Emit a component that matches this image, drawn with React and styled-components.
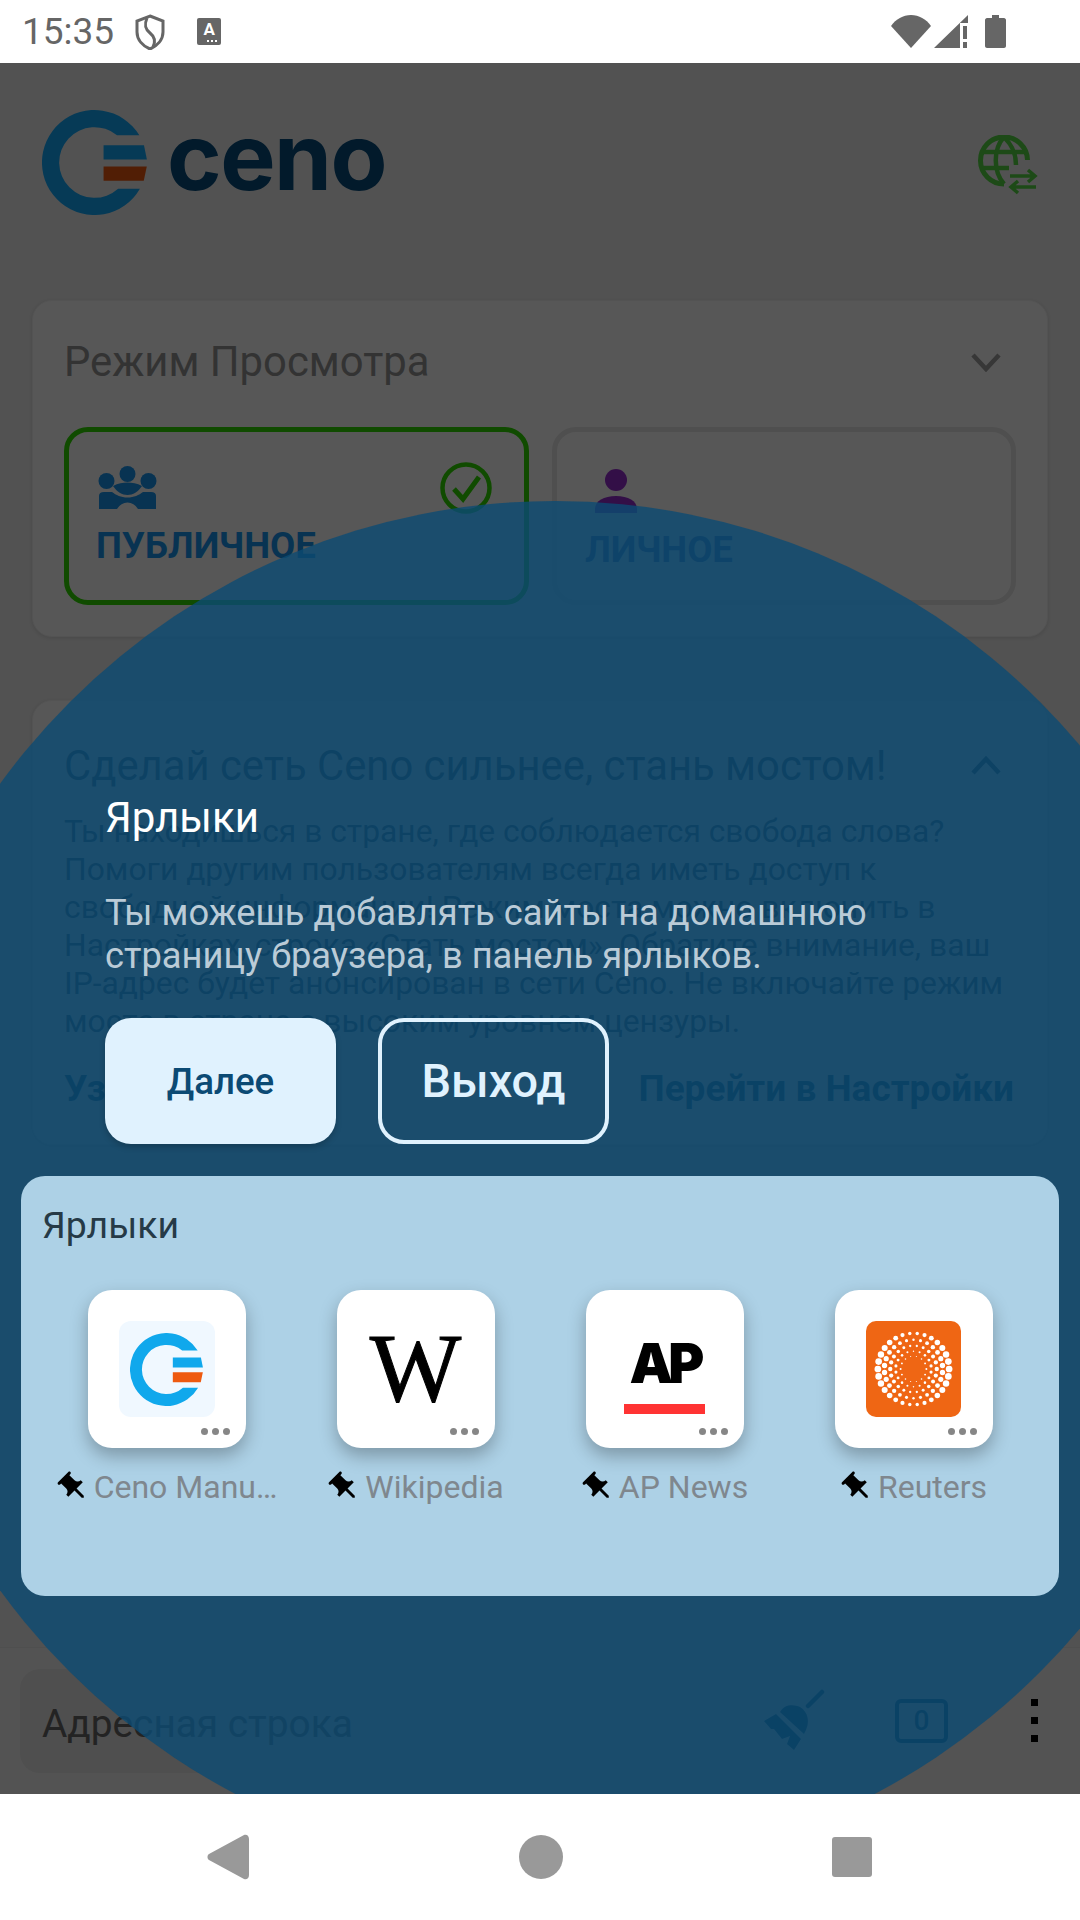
import React from "react";
import styled, { createGlobalStyle } from "styled-components";

const GlobalStyle = createGlobalStyle`
  html, body { margin: 0; padding: 0; background: #fff; }
  * { box-sizing: border-box; }
  body { font-family: Roboto, "Noto Sans", sans-serif; }
`;

const shortcuts = [
  { name: "Ceno Manu…", logo: "ceno" },
  { name: "Wikipedia", logo: "wiki" },
  { name: "AP News", logo: "ap" },
  { name: "Reuters", logo: "reuters" },
];

const bridgeLines = [
  "Ты находишься в стране, где соблюдается свобода слова?",
  "Помоги другим пользователям всегда иметь доступ к",
  "свободной информации! Режим моста можно включить в",
  "Настройках, строка «Стать мостом». Обратите внимание, ваш",
  "IP-адрес будет анонсирован в сети Ceno. Не включайте режим",
  "моста в стране с высоким уровнем цензуры.",
];

// dots of the reuters mark, rings from the outside in
const reutersDots = [];
[
  [36, 30, 3.4],
  [29.5, 26, 2.7],
  [23.5, 22, 2.2],
  [18, 18, 1.6],
  [13, 14, 1],
].forEach(([radius, count, size], ring) => {
  for (let i = 0; i < count; i++) {
    const angle = ((i + ring * 0.5) / count) * Math.PI * 2;
    const scale = 0.45 + 0.55 * Math.abs(Math.cos(angle));
    reutersDots.push({
      cx: 48 + radius * Math.cos(angle),
      cy: 48 + radius * Math.sin(angle),
      r: size * scale,
    });
  }
});

const CenoMark = ({ size, ring, low }) => (
  <svg width={size} height={size} viewBox="0 0 104 104">
    <path
      fill={ring}
      d="M96.4 25A52 52 0 1 0 97 78L75.4 78A35 35 0 1 1 74.3 25Z"
    />
    <path fill={ring} d="M61 35H101L103.9 49H61Z" />
    <path fill={low} d="M61 56H103.8L100.8 70H61Z" />
  </svg>
);

const GlobeIcon = () => (
  <svg width="62" height="62" viewBox="0 0 62 62" fill="none" stroke="#55d845" strokeWidth="5">
    <path d="M26 49A23.500 23.500 0 1 1 49.500 25" />
    <path d="M26 2C15 14 15 36 26 49M26 2C35 11 38 19 38 30" strokeWidth="4.500" />
    <path d="M5 17H47M5 33H31" strokeWidth="4.500" />
    <path d="M32 41H56M50 35L57 41L50 47M58 52H34M40 46L33 52L40 58" strokeWidth="3.500" />
  </svg>
);

const Chevron = ({ up }) => (
  <svg width="32" height="20" viewBox="0 0 32 20" fill="none" stroke={up ? "#3a5a78" : "#a0a0a0"} strokeWidth="4.500">
    <path d={up ? "M3 18L16 4L29 18" : "M3 3L16 17L29 3"} />
  </svg>
);

const PeopleIcon = () => (
  <svg width="60" height="44" viewBox="0 0 60 44" fill="#1896f0">
    <circle cx="29.500" cy="8" r="8" />
    <circle cx="8.500" cy="15" r="8" />
    <circle cx="50.500" cy="15" r="8" />
    <path d="M15 20C20 17 25 16.500 29.500 16.500C34 16.500 39 17 44 20C40 26 35 29 29.500 29C24 29 19 26 15 20Z" />
    <path d="M1 43V30Q1 26 6 26H14C18 29 23 31.500 29.500 31.500C36 31.500 41 29 45 26H53Q58 26 58 30V43H40Q36 36.500 29.500 36.500Q23 36.500 19 43Z" />
  </svg>
);

const CheckIcon = () => (
  <svg width="52" height="52" viewBox="0 0 52 52" fill="none" stroke="#30dc00" strokeWidth="4.500">
    <circle cx="26" cy="26" r="23.500" />
    <path d="M14 27L23 37L39 15" strokeWidth="5" />
  </svg>
);

const PersonIcon = () => (
  <svg width="44" height="44" viewBox="0 0 44 44" fill="#962cd0">
    <ellipse cx="22" cy="11" rx="11" ry="11" />
    <path d="M1 44V40C1 32 10 27 22 27C34 27 43 32 43 40V44Z" />
  </svg>
);

const BroomIcon = () => (
  <svg width="62" height="64" viewBox="0 0 62 64" fill="#0a5a8e">
    <path d="M44 17L58 3" fill="none" stroke="#0a5a8e" strokeWidth="4.500" strokeLinecap="round" />
    <path d="M16 23C20 15 30 15 36 18C44 23 47 33 40 45Z" />
    <path d="M0 32L12 25L37 50L30 61L23 55L26 47L18 50L10 40L7 40Z" />
  </svg>
);

const PinIcon = () => (
  <svg width="35" height="35" viewBox="0 0 24 24" fill="#000">
    <path
      transform="rotate(-45 12 12)"
      d="M16 9V4h1c.55 0 1-.45 1-1s-.45-1-1-1H7c-.55 0-1 .45-1 1s.45 1 1 1h1v5c0 1.66-1.34 3-3 3v2h5.97v7l1 1 1-1v-7H19v-2c-1.66 0-3-1.34-3-3z"
    />
  </svg>
);

const StatusIcons = {
  shield: (
    <svg width="30" height="36" viewBox="0 0 30 36" fill="none" stroke="#666" strokeWidth="3">
      <path d="M15 2L28 7V18C28 26 22 32 15 35C8 32 2 26 2 18V7Z" />
      <path d="M12 4C9 11 10 15 15 19C20 23 21 27 18 33" />
    </svg>
  ),
  wifi: (
    <svg width="40" height="33" viewBox="0 0 40 33" fill="#666">
      <path d="M0 11C5 4 12 0 20 0C28 0 35 4 40 11L20 33Z" />
    </svg>
  ),
  signal: (
    <svg width="34" height="33" viewBox="0 0 34 33" fill="#666">
      <path d="M34 0V8H26V33H0Z" />
      <path d="M29 11H33V24H29ZM29 27H33V33H29Z" />
    </svg>
  ),
  battery: (
    <svg width="21" height="33" viewBox="0 0 21 33" fill="#666">
      <path d="M7 0H14V3H19C20 3 21 4 21 5V31C21 32 20 33 19 33H2C1 33 0 32 0 31V5C0 4 1 3 2 3H7Z" />
    </svg>
  ),
};

function TileLogo({ logo }) {
  if (logo === "ceno") {
    return (
      <CenoTile>
        <CenoMark size={73} ring="#10a8ec" low="#ee5a10" />
      </CenoTile>
    );
  }
  if (logo === "wiki") {
    return <WikiLetter>W</WikiLetter>;
  }
  if (logo === "ap") {
    return (
      <ApMark>
        <ApLetters>AP</ApLetters>
        <ApBar />
      </ApMark>
    );
  }
  return (
    <ReutersTile>
      <svg width="96" height="96" viewBox="0 0 96 96" fill="#fff">
        {reutersDots.map((dot, i) => (
          <circle key={i} cx={dot.cx} cy={dot.cy} r={dot.r} />
        ))}
      </svg>
    </ReutersTile>
  );
}

function App() {
  return (
    <Screen>
      <GlobalStyle />
      <StatusBar>
        <StatusGroup>
          <Clock>15:35</Clock>
          {StatusIcons.shield}
          <KeyboardBadge>A</KeyboardBadge>
        </StatusGroup>
        <StatusGroup $tight>
          {StatusIcons.wifi}
          {StatusIcons.signal}
          <BatterySlot>{StatusIcons.battery}</BatterySlot>
        </StatusGroup>
      </StatusBar>

      <Main>
        <BrandRow>
          <Brand>
            <CenoMark size={105} ring="#12aafd" low="#ee5a10" />
            <BrandName>ceno</BrandName>
          </Brand>
          <GlobeSlot>
            <GlobeIcon />
          </GlobeSlot>
        </BrandRow>

        <Card>
          <CardHeader $height={126} $bottom={5}>
            <CardTitle>Режим Просмотра</CardTitle>
            <Chevron />
          </CardHeader>
          <Modes>
            <ModeBox $active>
              <ModeTop>
                <PeopleIcon />
                <CheckIcon />
              </ModeTop>
              <ModeName>ПУБЛИЧНОЕ</ModeName>
            </ModeBox>
            <ModeBox>
              <ModeTop $personal>
                <PersonIcon />
              </ModeTop>
              <ModeName $personal>ЛИЧНОЕ</ModeName>
            </ModeBox>
          </Modes>
        </Card>

        <Card $bridge>
          <CardHeader $height={111} $top={17}>
            <CardTitle $bridge>Сделай сеть Ceno сильнее, стань мостом!</CardTitle>
            <Chevron up />
          </CardHeader>
          <BridgeText>
            {bridgeLines.map((line) => (
              <div key={line}>{line}</div>
            ))}
          </BridgeText>
          <BridgeActions>
            <ActionLink>Узнать больше</ActionLink>
            <ActionLink>Перейти в Настройки</ActionLink>
          </BridgeActions>
        </Card>

        <BottomBar>
          <AddressBar>Адресная строка</AddressBar>
          <BroomSlot>
            <BroomIcon />
          </BroomSlot>
          <TabCount>0</TabCount>
          <MenuDots>
            <i />
            <i />
            <i />
          </MenuDots>
        </BottomBar>

        <Scrim />
        <Spotlight />

        <Tour>
          <TourTitle>Ярлыки</TourTitle>
          <TourText>
            Ты можешь добавлять сайты на домашнюю
            <br />
            страницу браузера, в панель ярлыков.
          </TourText>
          <TourButtons>
            <NextButton>Далее</NextButton>
            <ExitButton>Выход</ExitButton>
          </TourButtons>
          <ShortcutPanel>
            <ShortcutTitle>Ярлыки</ShortcutTitle>
            <ShortcutGrid>
              {shortcuts.map((item) => (
                <Shortcut key={item.name}>
                  <Tile>
                    <TileLogo logo={item.logo} />
                    <TileDots>
                      <i />
                      <i />
                      <i />
                    </TileDots>
                  </Tile>
                  <ShortcutLabel>
                    <PinIcon />
                    <span>{item.name}</span>
                  </ShortcutLabel>
                </Shortcut>
              ))}
            </ShortcutGrid>
          </ShortcutPanel>
        </Tour>
      </Main>

      <NavBar>
        <svg width="42" height="46" viewBox="0 0 42 46" fill="#999">
          <path d="M37 1C39 0 42 1 42 5V41C42 45 39 46 37 45L2 26C0 25 0 21 2 20Z" />
        </svg>
        <HomeDot />
        <RecentSquare />
      </NavBar>
    </Screen>
  );
}

const Screen = styled.div`
  width: 1080px;
  height: 1920px;
  display: flex;
  flex-direction: column;
  overflow: hidden;
`;

const StatusBar = styled.header`
  height: 63px;
  background: #fff;
  display: flex;
  align-items: center;
  justify-content: space-between;
  padding: 0 74px 0 22px;
`;

const StatusGroup = styled.div`
  display: flex;
  align-items: center;
  gap: ${(p) => (p.$tight ? "3px" : "21px")};
`;

const BatterySlot = styled.div`
  display: flex;
  margin-left: 14px;
`;

const Clock = styled.span`
  font-size: 37px;
  color: #666;
  line-height: 63px;
`;

const KeyboardBadge = styled.span`
  position: relative;
  width: 24px;
  height: 27px;
  margin-left: 11px;
  border-radius: 2px;
  background: #666;
  color: #fff;
  font-size: 17px;
  font-weight: 700;
  line-height: 22px;
  text-align: center;

  &::after {
    content: "";
    position: absolute;
    right: 3px;
    bottom: 3px;
    width: 11px;
    height: 2px;
    background: repeating-linear-gradient(90deg, #fff 0 2px, transparent 2px 4px);
  }
`;

const Main = styled.main`
  position: relative;
  flex: 1;
  overflow: hidden;
  background: #f0f0f0;
  display: flex;
  flex-direction: column;
`;

const BrandRow = styled.div`
  height: 237px;
  padding: 47px 40px 0 42px;
  display: flex;
  align-items: flex-start;
  justify-content: space-between;
`;

const Brand = styled.div`
  display: flex;
  align-items: center;
  gap: 20px;
`;

const BrandName = styled.span`
  font-family: Inter, sans-serif;
  font-size: 93px;
  font-weight: 700;
  line-height: 105px;
  letter-spacing: -1.5px;
  color: #064c7e;
  position: relative;
  top: -6px;
`;

const GlobeSlot = styled.div`
  display: flex;
  padding-top: 25px;
`;

const Card = styled.section`
  margin: ${(p) => (p.$bridge ? "63px" : "0")} 32px 0;
  padding: 0 31px;
  height: ${(p) => (p.$bridge ? "445px" : "337px")};
  background: #fff;
  border: 1px solid #f4f4f4;
  border-radius: 20px;
  box-shadow: 0 1px 4px rgba(0, 0, 0, 0.12);
`;

const CardHeader = styled.div`
  height: ${(p) => p.$height}px;
  padding: ${(p) => p.$top || 0}px 14px ${(p) => p.$bottom || 0}px 0;
  display: flex;
  align-items: center;
  justify-content: space-between;
`;

const CardTitle = styled.h2`
  margin: 0;
  font-size: 41.8px;
  font-weight: 400;
  color: ${(p) => (p.$bridge ? "#3a5a78" : "#969696")};
`;

const Modes = styled.div`
  display: grid;
  grid-template-columns: 465px 464px;
  gap: 23px;
`;

const ModeBox = styled.div`
  height: 178px;
  padding: 0 32px 0 29px;
  border: 5px solid ${(p) => (p.$active ? "#30dc00" : "#e6e6e6")};
  border-radius: 24px;
`;

const ModeTop = styled.div`
  display: flex;
  align-items: center;
  justify-content: space-between;
  height: 52px;
  margin-top: 30px;
  padding: ${(p) => (p.$personal ? "6px 0 0 8px" : "0")};
`;

const ModeName = styled.div`
  margin-top: ${(p) => (p.$personal ? "17px" : "13px")};
  margin-left: ${(p) => (p.$personal ? "-1px" : "-2px")};
  font-size: 36.6px;
  font-weight: 700;
  line-height: 38px;
  color: ${(p) => (p.$personal ? "#3d6dc0" : "#1896f0")};
`;

const BridgeText = styled.div`
  font-size: 31.8px;
  line-height: 38px;
  color: #3a5a78;
  white-space: nowrap;
`;

const BridgeActions = styled.div`
  margin-top: 30px;
  display: flex;
  justify-content: space-between;
  padding-right: 2px;
`;

const ActionLink = styled.span`
  font-size: 37px;
  font-weight: 700;
  line-height: 38px;
  color: #0a5a8e;
`;

const BottomBar = styled.footer`
  margin-top: auto;
  height: 147px;
  padding: 21px 0 22px 20px;
  background: #f4f4f4;
  border-top: 1px solid #e8e8e8;
  display: flex;
  align-items: center;
`;

const AddressBar = styled.div`
  width: 690px;
  height: 104px;
  padding: 0 22px;
  border-radius: 20px;
  background: #e6e6e6;
  font-size: 38.8px;
  line-height: 110px;
  color: #666;
`;

const BroomSlot = styled.div`
  display: flex;
  margin-left: 54px;
`;

const TabCount = styled.div`
  width: 53px;
  height: 44px;
  margin-left: 69px;
  border: 4.5px solid #0a5a8e;
  border-radius: 6px;
  color: #0a5a8e;
  font-size: 28px;
  font-weight: 500;
  line-height: 35px;
  text-align: center;
`;

const MenuDots = styled.div`
  margin-left: 83px;
  display: flex;
  flex-direction: column;
  gap: 11px;

  i {
    display: block;
    width: 7px;
    height: 7px;
    background: #000;
  }
`;

const Scrim = styled.div`
  position: absolute;
  inset: 0;
  background: rgba(0, 0, 0, 0.66);
`;

const Spotlight = styled.div`
  position: absolute;
  left: -131px;
  top: 438px;
  width: 1372px;
  height: 1372px;
  border-radius: 50%;
  background: rgba(13, 75, 115, 0.8);
`;

const Tour = styled.div`
  position: absolute;
  inset: 0;
  padding-top: 732px;
`;

const TourTitle = styled.div`
  margin-left: 105px;
  font-size: 42px;
  line-height: 46px;
  color: #fff;
`;

const TourText = styled.div`
  margin: 50px 0 0 105px;
  font-size: 36.3px;
  line-height: 43px;
  color: #bacbd7;
`;

const TourButtons = styled.div`
  margin: 41px 0 0 105px;
  display: flex;
  gap: 42px;
`;

const NextButton = styled.button`
  width: 231px;
  height: 126px;
  border: 0;
  border-radius: 26px;
  background: #e0f2fe;
  font-family: Roboto, sans-serif;
  font-size: 36.7px;
  font-weight: 500;
  color: #0b4a74;
  box-shadow: 0 3px 6px rgba(0, 0, 0, 0.2);
`;

const ExitButton = styled.button`
  width: 231px;
  height: 126px;
  border: 4.5px solid #e0f2fe;
  border-radius: 26px;
  background: transparent;
  font-family: Roboto, sans-serif;
  font-size: 46.8px;
  font-weight: 500;
  color: #e0f2fe;
`;

const ShortcutPanel = styled.section`
  margin: 32px 21px 0 21px;
  height: 420px;
  padding: 26px 0 0 21px;
  border-radius: 24px;
  background: #add1e6;
`;

const ShortcutTitle = styled.div`
  font-size: 37.4px;
  line-height: 46px;
  color: #263a47;
`;

const ShortcutGrid = styled.div`
  margin-top: 42px;
  display: grid;
  grid-template-columns: repeat(4, 249px);
`;

const Shortcut = styled.div`
  display: flex;
  flex-direction: column;
  align-items: center;
`;

const Tile = styled.div`
  position: relative;
  width: 158px;
  height: 158px;
  border-radius: 24px;
  background: #fff;
  box-shadow: 0 8px 18px rgba(0, 0, 0, 0.28);
  display: flex;
  align-items: center;
  justify-content: center;
`;

const TileDots = styled.div`
  position: absolute;
  right: 16px;
  bottom: 13px;
  display: flex;
  gap: 4px;

  i {
    display: block;
    width: 7px;
    height: 7px;
    border-radius: 50%;
    background: #868686;
  }
`;

const ShortcutLabel = styled.div`
  margin-top: 20px;
  height: 38px;
  display: flex;
  align-items: center;
  gap: 3px;
  font-size: 32px;
  line-height: 38px;
  color: #7f878e;
  white-space: nowrap;
`;

const CenoTile = styled.div`
  width: 96px;
  height: 96px;
  border-radius: 12px;
  background: #f0f8ff;
  display: flex;
  align-items: center;
  justify-content: center;
`;

const WikiLetter = styled.div`
  font-family: "Liberation Serif", serif;
  font-size: 97px;
  line-height: 96px;
  color: #000;
  -webkit-text-stroke: 1px #000;
`;

const ApMark = styled.div`
  width: 96px;
  padding-top: 14px;
  display: flex;
  flex-direction: column;
  align-items: center;
`;

const ApLetters = styled.div`
  font-family: Inter, sans-serif;
  font-size: 55px;
  font-weight: 900;
  line-height: 50px;
  letter-spacing: -5px;
  color: #000;
`;

const ApBar = styled.div`
  width: 81px;
  height: 10px;
  margin-top: 16px;
  background: #ff3333;
`;

const ReutersTile = styled.div`
  width: 95px;
  height: 96px;
  border-radius: 10px;
  background: #ef6614;
  display: flex;
  overflow: hidden;
`;

const NavBar = styled.nav`
  height: 126px;
  background: #fff;
  display: flex;
  align-items: center;
  padding: 0 208px 0 207px;
  justify-content: space-between;
`;

const HomeDot = styled.div`
  width: 44px;
  height: 44px;
  border-radius: 50%;
  background: #999;
`;

const RecentSquare = styled.div`
  width: 40px;
  height: 40px;
  border-radius: 3px;
  background: #999;
`;

export default App;
